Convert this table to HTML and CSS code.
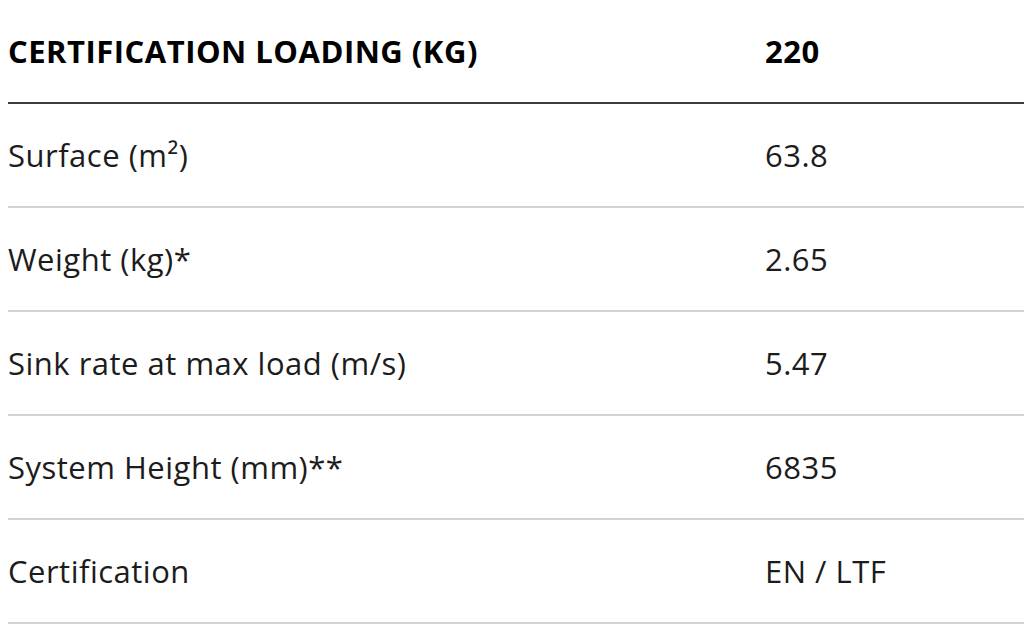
FILE: index.html
```html
<!DOCTYPE html>
<html lang="en">
<head>
<meta charset="utf-8">
<title>Specifications</title>
<link rel="stylesheet" href="styles.css">
</head>
<body>
<table class="specs">
  <thead>
    <tr class="head-row">
      <th class="label">CERTIFICATION LOADING (KG)</th>
      <th class="value">220</th>
    </tr>
  </thead>
  <tbody>
    <tr class="row"><td class="label">Surface (m²)</td><td class="value">63.8</td></tr>
    <tr class="row"><td class="label">Weight (kg)*</td><td class="value">2.65</td></tr>
    <tr class="row"><td class="label">Sink rate at max load (m/s)</td><td class="value">5.47</td></tr>
    <tr class="row"><td class="label">System Height (mm)**</td><td class="value">6835</td></tr>
    <tr class="row"><td class="label">Certification</td><td class="value">EN / LTF</td></tr>
  </tbody>
</table>
</body>
</html>
```
FILE: styles.css
```css
html, body {
  margin: 0;
  padding: 0;
  background: #ffffff;
}
body {
  padding-left: 8px;
  overflow: hidden;
}
.specs {
  width: 1016px;
  border-collapse: collapse;
  table-layout: fixed;
  font-family: "Open Sans", "Liberation Sans", sans-serif;
  font-size: 31px;
  letter-spacing: 0.5px;
  color: #1c1c1c;
}
.specs th, .specs td {
  padding: 0;
  height: 102px;
  text-align: left;
  vertical-align: middle;
}
.specs .label {
  width: 757px;
}
.head-row th {
  font-weight: 700;
  color: #000000;
  border-bottom: 2px solid #3c3c3c;
}
.row td {
  font-weight: 400;
  border-bottom: 2px solid #d2d2d2;
}
```
